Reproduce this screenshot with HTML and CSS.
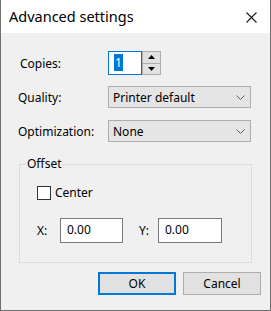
FILE: index.html
```html
<!DOCTYPE html>
<html>
<head>
<meta charset="utf-8">
<link rel="stylesheet" href="styles.css">
</head>
<body>
<div class="window">
  <div class="titlebar">
    <span class="title">Advanced settings</span>
    <svg class="close" width="11" height="11" viewBox="0 0 11 11"><path d="M0.5 0.5 L10.5 10.5 M10.5 0.5 L0.5 10.5" stroke="#1a1a1a" stroke-width="1.1" fill="none"/></svg>
  </div>
  <div class="content">
    <div class="row row-copies">
      <label class="label label-copies">Copies:</label>
      <div class="spin">
        <div class="spin-input"><span class="sel">1</span></div>
        <div class="spin-buttons">
          <div class="spin-btn"><svg width="7" height="4" viewBox="0 0 7 4"><path d="M3.5 0 L7 4 L0 4 Z" fill="#000"/></svg></div>
          <div class="spin-btn"><svg width="7" height="4" viewBox="0 0 7 4"><path d="M0 0 L7 0 L3.5 4 Z" fill="#000"/></svg></div>
        </div>
      </div>
    </div>
    <div class="row row-quality">
      <label class="label">Quality:</label>
      <div class="combo"><span>Printer default</span><svg class="chev" width="9" height="5" viewBox="0 0 9 5"><path d="M0.5 0.5 L4.5 4.5 L8.5 0.5" stroke="#606060" stroke-width="1" fill="none"/></svg></div>
    </div>
    <div class="row row-opt">
      <label class="label">Optimization:</label>
      <div class="combo"><span>None</span><svg class="chev" width="9" height="5" viewBox="0 0 9 5"><path d="M0.5 0.5 L4.5 4.5 L8.5 0.5" stroke="#606060" stroke-width="1" fill="none"/></svg></div>
    </div>
    <fieldset class="group">
      <legend class="legend">Offset</legend>
      <div class="check-row">
        <span class="checkbox"></span>
        <span class="check-label">Center</span>
      </div>
      <div class="xy-row">
        <label class="xy-label">X:</label>
        <div class="textbox tb-x">0.00</div>
        <label class="xy-label y-label">Y:</label>
        <div class="textbox tb-y">0.00</div>
      </div>
    </fieldset>
    <div class="buttons">
      <button class="btn btn-default">OK</button>
      <button class="btn">Cancel</button>
    </div>
  </div>
</div>
</body>
</html>
```
FILE: styles.css
```css
* { box-sizing: border-box; }
html, body { margin: 0; padding: 0; background: #f0f0f0; }
body {
  font-family: "Noto Sans", "Open Sans", sans-serif;
  font-size: 12px;
  color: #000;
}
.window {
  width: 271px;
  height: 311px;
  border: 1px solid #707070;
  border-top: none;
  background: #f0f0f0;
  display: flex;
  flex-direction: column;
}
.titlebar {
  height: 33px;
  background: #fff;
  display: flex;
  align-items: center;
  justify-content: space-between;
  padding: 0 13px 0 8px;
}
.title {
  font-size: 14.5px;
  color: #000;
  margin-top: -1px;
}
.close { display: block; margin-top: 1px; }
.content {
  padding: 0 0 0 17px;
  display: flex;
  flex-direction: column;
}
.row {
  display: flex;
  align-items: center;
}
.row-copies { margin-top: 18px; height: 24px; }
.row-quality { margin-top: 11px; height: 22px; }
.row-opt { margin-top: 12px; height: 22px; }
.label { width: 90px; }
.label-copies { padding-left: 2px; }
.spin { display: flex; height: 24px; }
.spin-input {
  width: 34px;
  height: 24px;
  background: #fff;
  border: 1px solid #0078d7;
  padding: 2px 0 0 5px;
  line-height: 17px;
}
.sel {
  background: #0078d7;
  color: #fff;
  display: inline-block;
  padding: 0 1px;
}
.spin-buttons {
  display: flex;
  flex-direction: column;
  width: 19px;
  height: 24px;
}
.spin-btn {
  flex: 1;
  background: #e1e1e1;
  border: 1px solid #adadad;
  display: flex;
  align-items: center;
  justify-content: center;
}
.spin-btn + .spin-btn { border-top: none; }
.spin-btn svg { display: block; }
.combo {
  width: 143px;
  height: 22px;
  background: #e5e5e5;
  border: 1px solid #adadad;
  display: flex;
  align-items: center;
  justify-content: space-between;
  padding: 0 5px 0 4px;
}
.chev { display: block; }
.group {
  margin: 14px 0 0 1px;
  width: 233px;
  border: 1px solid #dcdcdc;
  padding: 0 0 19px 0;
}
.legend {
  margin-left: 6px;
  padding: 0 1px;
  line-height: 16px;
}
.check-row {
  display: flex;
  align-items: center;
  margin: 13px 0 0 17px;
  height: 15px;
}
.checkbox {
  width: 14px;
  height: 14px;
  background: #fff;
  border: 1px solid #333;
  margin-right: 4px;
}
.xy-row {
  display: flex;
  align-items: center;
  margin: 18px 0 0 17px;
  height: 25px;
}
.xy-label { width: 23px; }
.y-label { margin-left: 16px; width: 19px; }
.textbox {
  height: 25px;
  background: #fff;
  border: 1px solid #7a7a7a;
  padding: 3px 0 0 6px;
  line-height: 16px;
}
.tb-x { width: 63px; }
.tb-y { width: 64px; }
.buttons {
  display: flex;
  justify-content: flex-end;
  gap: 7px;
  margin-top: 9px;
  padding-right: 9px;
}
.btn {
  width: 78px;
  height: 23px;
  background: #e1e1e1;
  border: 1px solid #adadad;
  font-family: "Noto Sans", "Open Sans", sans-serif;
  font-size: 12px;
  color: #000;
  padding: 0;
}
.btn-default {
  border: 2px solid #0078d7;
}
```
